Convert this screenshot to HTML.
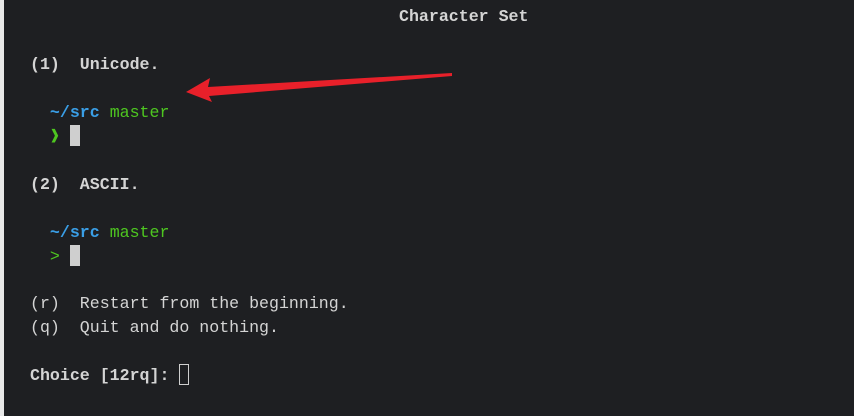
<!DOCTYPE html><html><head><style>
body{margin:0;width:854px;height:416px;background:#1e1f22;overflow:hidden;position:relative;font-family:"Liberation Mono",monospace;font-size:16.6px;color:#d4d4d4}
.l{position:absolute;left:30px;height:24px;line-height:24px;white-space:pre}
b{font-weight:bold}
.bl{color:#3a9ee6}.gr{color:#4ec620}
.cur{display:inline-block;width:10px;height:21px;background:#cfcfcf;vertical-align:-5px}
.cb{display:inline-block;width:8px;height:19px;border:1.5px solid #cfcfcf;vertical-align:-5px}
</style></head><body>
<div style="position:absolute;left:0;top:0;width:4px;height:416px;background:#e8e8e8"></div>
<div class="l" style="left:399px;top:5px"><b>Character Set</b></div>
<div class="l" style="top:53px"><b>(1)  Unicode.</b></div>
<div class="l" style="top:101px">  <b class="bl">~/src</b> <span class="gr">master</span></div>
<div class="l" style="top:125px">  <b class="gr">❱</b> <span class="cur"></span></div>
<div class="l" style="top:173px"><b>(2)  ASCII.</b></div>
<div class="l" style="top:221px">  <b class="bl">~/src</b> <span class="gr">master</span></div>
<div class="l" style="top:245px">  <span class="gr">&gt;</span> <span class="cur"></span></div>
<div class="l" style="top:292px">(r)  Restart from the beginning.</div>
<div class="l" style="top:316px">(q)  Quit and do nothing.</div>
<div class="l" style="top:364px"><b>Choice [12rq]:</b> <span class="cb"></span></div>
<svg style="position:absolute;left:0;top:0" width="854" height="416"><polygon points="186,92 210,78 208,87 452,73 452,76 209,96 212,102" fill="#e8202a"/></svg>
</body></html>
